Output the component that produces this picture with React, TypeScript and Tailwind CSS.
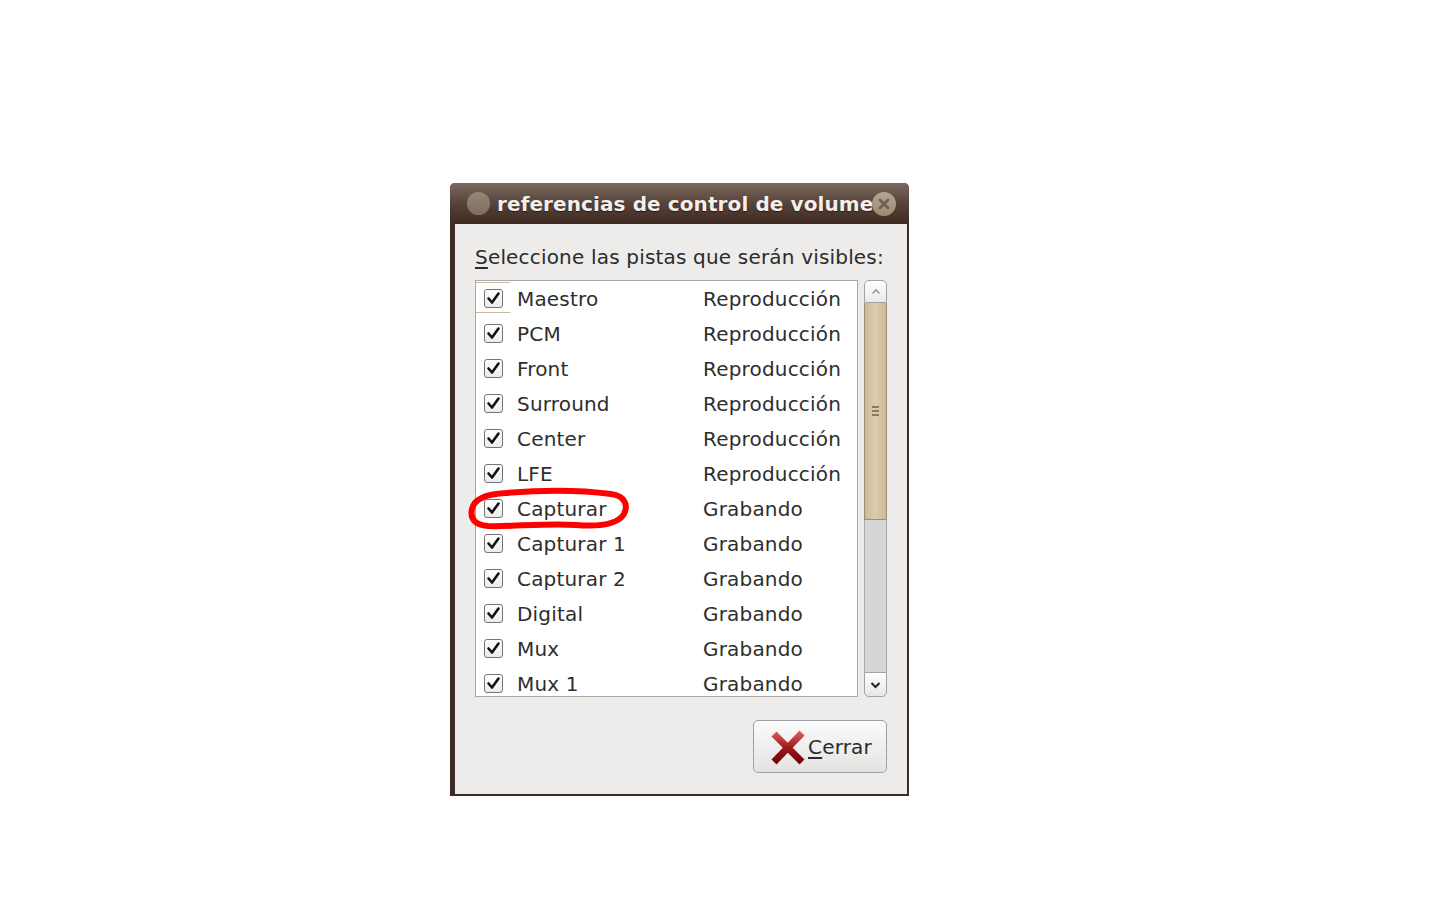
import React from 'react';

const tracks: [string, string][] = [
  ['Maestro', 'Reproducción'],
  ['PCM', 'Reproducción'],
  ['Front', 'Reproducción'],
  ['Surround', 'Reproducción'],
  ['Center', 'Reproducción'],
  ['LFE', 'Reproducción'],
  ['Capturar', 'Grabando'],
  ['Capturar 1', 'Grabando'],
  ['Capturar 2', 'Grabando'],
  ['Digital', 'Grabando'],
  ['Mux', 'Grabando'],
  ['Mux 1', 'Grabando'],
];

function CheckBox() {
  return (
    <div className="w-[19px] h-[19px] rounded-[3px] border-[1.5px] border-[#737373] bg-gradient-to-b from-white to-[#ececec] flex items-center justify-center">
      <svg width="15" height="15" viewBox="0 0 15 15">
        <path d="M2.5 7.5 L6 11.5 L12.5 2.5" fill="none" stroke="#111" strokeWidth="2.6" strokeLinecap="round" strokeLinejoin="round" />
      </svg>
    </div>
  );
}

function RedX() {
  return (
    <svg width="38" height="38" viewBox="0 0 38 38">
      <defs>
        <linearGradient id="xg" x1="0" y1="0" x2="0" y2="1">
          <stop offset="0" stopColor="#d25a5a" />
          <stop offset="0.5" stopColor="#a3171a" />
          <stop offset="1" stopColor="#6e0608" />
        </linearGradient>
      </defs>
      <path d="M5 6 L33 34 M33 5 L5 34" stroke="url(#xg)" strokeWidth="7" strokeLinecap="butt" />
    </svg>
  );
}

function App() {
  return (
    <div className="relative w-[1440px] h-[900px] bg-white pt-[183px] pl-[450px]" style={{ fontFamily: '"DejaVu Sans", Verdana, sans-serif' }}>
      {/* Window */}
      <div className="w-[459px] h-[613px] flex flex-col rounded-t-[5px] bg-[#3d2b24] pl-[5px] pr-[2px] pb-[2px]">
        {/* Title bar */}
        <div className="-ml-[5px] -mr-[2px] h-[41px] rounded-t-[5px] bg-gradient-to-b from-[#7a6a60] via-[#574239] to-[#3f2b23] flex items-center pl-[17px] pr-[13px]">
          <div className="w-[23px] h-[23px] rounded-full bg-gradient-to-b from-[#958674] to-[#7d6f5f] shrink-0" />
          <div className="ml-[7px] flex-1 min-w-0 text-[20px] font-bold text-[#f3efea] whitespace-nowrap tracking-[0.1px] [text-shadow:0_1px_1px_#2a1a14]">
            referencias de control de volume
          </div>
          <div className="w-[24px] h-[24px] rounded-full bg-gradient-to-b from-[#b3a58f] to-[#9a8b74] shrink-0 flex items-center justify-center">
            <svg width="14" height="14" viewBox="0 0 14 14">
              <path d="M3 3 L11 11 M11 3 L3 11" stroke="#6e6050" strokeWidth="2.6" strokeLinecap="round" />
            </svg>
          </div>
        </div>

        {/* Body */}
        <div className="flex-1 bg-[#edeceb] px-[20px] pt-[21px] flex flex-col text-[#2b2b2b] tracking-[0.18px]">
          <div className="text-[20px] leading-[24px]">
            <span className="underline underline-offset-[3px]">S</span>eleccione las pistas que serán visibles:
          </div>

          <div className="mt-[11px] flex gap-[6px] h-[417px]">
            {/* List */}
            <div className="flex-1 border border-[#a8a8a8] bg-white overflow-hidden">
              {tracks.map(([name, kind], i) => (
                <div key={name} className="relative h-[35px] flex items-center text-[20px] text-[#2e2e2e]">
                  {i === 0 && (
                    <div className="absolute left-0 top-[1px] w-[34px] h-[31px] border-y border-[#c9b99c]" />
                  )}
                  <div className="w-[41px] pl-[8px] shrink-0">
                    <CheckBox />
                  </div>
                  <div className="w-[186px] shrink-0">{name}</div>
                  <div>{kind}</div>
                </div>
              ))}
            </div>

            {/* Scrollbar */}
            <div className="w-[23px] flex flex-col">
              <div className="h-[23px] rounded-t-[5px] border border-[#a3a3a3] bg-gradient-to-b from-white to-[#e9e9e9] flex items-center justify-center">
                <svg width="10" height="7" viewBox="0 0 10 7">
                  <path d="M1.5 5.5 L5 2 L8.5 5.5" fill="none" stroke="#9a9a9a" strokeWidth="1.6" />
                </svg>
              </div>
              <div className="h-[217px] border-x border-[#9e8d70] bg-gradient-to-r from-[#cdbb98] via-[#dccdad] to-[#cbb896] flex flex-col items-center justify-center gap-[2px] border-b border-b-[#9e8d70]">
                <div className="w-[7px] h-[2px] bg-[#8a7a60]" />
                <div className="w-[7px] h-[2px] bg-[#8a7a60]" />
                <div className="w-[7px] h-[2px] bg-[#8a7a60]" />
              </div>
              <div className="flex-1 border-x border-[#a8a8a8] bg-[#d6d6d6]" />
              <div className="h-[25px] rounded-b-[5px] border border-[#a3a3a3] bg-gradient-to-b from-white to-[#e6e6e6] flex items-center justify-center">
                <svg width="11" height="8" viewBox="0 0 11 8">
                  <path d="M1.5 2 L5.5 6 L9.5 2" fill="none" stroke="#222" strokeWidth="2" />
                </svg>
              </div>
            </div>
          </div>

          <div className="mt-[23px] flex justify-end">
            <button className="w-[134px] h-[53px] rounded-[5px] border border-[#a0a0a0] bg-gradient-to-b from-[#fbfbfb] to-[#e4e3e2] flex items-center pl-[15px] text-[20px] text-[#2b2b2b]">
              <RedX />
              <span className="ml-[1px]">
                <span className="underline underline-offset-[3px]">C</span>errar
              </span>
            </button>
          </div>
        </div>
      </div>

      {/* Annotation */}
      <svg className="absolute left-[466px] top-[486px]" width="168" height="50" viewBox="0 0 168 50">
        <path
          d="M40 7 C75 4 115 4 145 8 C160 10 162 20 158 28 C152 38 135 41 110 39 C80 37 45 41 22 40 C8 39 4 32 6 23 C8 13 20 8 40 7 Z"
          fill="none"
          stroke="#ff0000"
          strokeWidth="6"
          strokeLinecap="round"
          strokeLinejoin="round"
        />
      </svg>
    </div>
  );
}

export default App;
